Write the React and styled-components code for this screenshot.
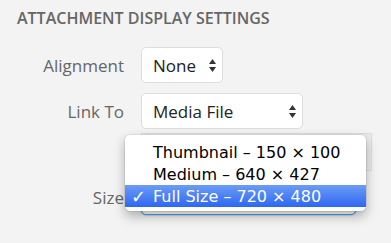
import React from "react";
import styled, { createGlobalStyle } from "styled-components";

const GlobalStyle = createGlobalStyle`
  body {
    margin: 0;
    background: #f3f3f3;
    font-family: "Open Sans", "Liberation Sans", sans-serif;
  }
`;

const Page = styled.div`
  width: 391px;
  height: 243px;
  overflow: hidden;
  background: #f3f3f3;
`;

const Heading = styled.h2`
  margin: 0;
  padding: 8px 17px 0;
  font-size: 16px;
  line-height: 20px;
  font-weight: 600;
  color: #666;
  text-transform: uppercase;
`;

const Form = styled.div`
  display: flex;
  flex-direction: column;
  margin-top: 19px;
`;

const Row = styled.div`
  position: relative;
  display: flex;
  align-items: center;
  gap: 17px;
  margin-top: ${(p) => p.$top || 0}px;
`;

const Label = styled.span`
  width: 124px;
  flex-shrink: 0;
  text-align: right;
  font-size: 17px;
  color: #666;
`;

const Select = styled.div`
  display: flex;
  align-items: center;
  justify-content: space-between;
  box-sizing: border-box;
  width: ${(p) => p.$width}px;
  height: 36px;
  padding: 0 6px 0 11px;
  background: #fff;
  border: 1px solid ${(p) => (p.$focus ? "#5b9dd9" : "#ddd")};
  border-radius: 5px;
  box-shadow: ${(p) => (p.$focus ? "0 0 2px rgba(30, 140, 190, 0.8)" : "none")};
  font-size: 17px;
  color: #222;
`;

const UrlInput = styled.div`
  box-sizing: border-box;
  width: 231px;
  height: 38px;
  background: #ebebeb;
  border: 1px solid #ddd;
`;

const Popup = styled.ul`
  position: absolute;
  top: -44px;
  left: 125px;
  width: 241px;
  margin: 0;
  padding: 6px 0 4px;
  list-style: none;
  background: #fff;
  border-radius: 5px;
  box-shadow: 0 0 0 1px rgba(0, 0, 0, 0.06), 0 5px 12px rgba(0, 0, 0, 0.3);
  font-family: "DejaVu Sans", "Liberation Sans", sans-serif;
  font-size: 16px;
`;

const Option = styled.li`
  display: flex;
  align-items: center;
  height: 22px;
  padding-left: 28px;
  position: relative;
  color: ${(p) => (p.$selected ? "#fff" : "#000")};
  background: ${(p) => (p.$selected ? "linear-gradient(#6b9cf6, #2e67f2)" : "transparent")};
`;

const Check = styled.span`
  position: absolute;
  left: 6px;
  font-size: 18px;
  font-weight: bold;
`;

const Arrows = () => (
  <svg width="7" height="13" viewBox="0 0 7 13">
    <path d="M3.5 0 L7 5 H0 Z" fill="#333" />
    <path d="M3.5 13 L7 8 H0 Z" fill="#333" />
  </svg>
);

export default function App() {
  return (
    <Page>
      <GlobalStyle />
      <Heading>Attachment Display Settings</Heading>
      <Form>
        <Row>
          <Label>Alignment</Label>
          <Select $width={82}>
            None <Arrows />
          </Select>
        </Row>
        <Row $top={10}>
          <Label>Link To</Label>
          <Select $width={162}>
            Media File <Arrows />
          </Select>
        </Row>
        <Row $top={4}>
          <Label />
          <UrlInput />
        </Row>
        <Row $top={8}>
          <Label>Size</Label>
          {/* the open menu covers this select's own text */}
          <Select $width={215} $focus />
          <Popup>
            <Option>Thumbnail – 150 × 100</Option>
            <Option>Medium – 640 × 427</Option>
            <Option $selected>
              <Check>✓</Check>Full Size – 720 × 480
            </Option>
          </Popup>
        </Row>
      </Form>
    </Page>
  );
}
